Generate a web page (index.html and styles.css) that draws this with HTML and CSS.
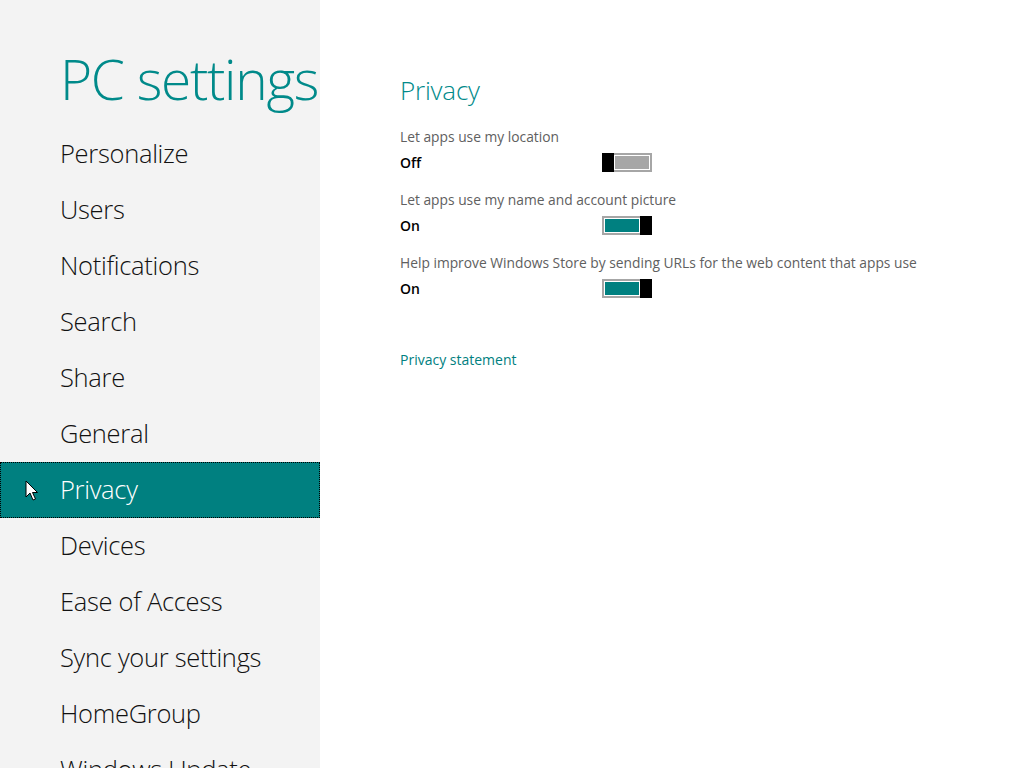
FILE: index.html
```html
<!DOCTYPE html>
<html>
<head>
<meta charset="utf-8">
<link rel="stylesheet" href="styles.css">
</head>
<body>
<div class="app">
  <aside class="nav">
    <h1 class="title">PC settings</h1>
    <ul class="menu">
      <li class="item">Personalize</li>
      <li class="item">Users</li>
      <li class="item">Notifications</li>
      <li class="item">Search</li>
      <li class="item">Share</li>
      <li class="item">General</li>
      <li class="item selected">Privacy
        <svg class="cursor" width="14" height="22" viewBox="0 0 14 22"><path d="M1 1 L1 17 L5 13 L8 20 L10.5 19 L7.5 12.5 L12.5 12.5 Z" fill="#fff" stroke="#000" stroke-width="1" stroke-linejoin="miter"/></svg>
      </li>
      <li class="item">Devices</li>
      <li class="item">Ease of Access</li>
      <li class="item">Sync your settings</li>
      <li class="item">HomeGroup</li>
      <li class="item">Windows Update</li>
    </ul>
  </aside>
  <main class="content">
    <h2 class="heading">Privacy</h2>
    <div class="setting">
      <div class="label">Let apps use my location</div>
      <div class="row"><span class="value">Off</span><span class="toggle off"><span class="fill"></span><span class="thumb"></span></span></div>
    </div>
    <div class="setting">
      <div class="label">Let apps use my name and account picture</div>
      <div class="row"><span class="value">On</span><span class="toggle on"><span class="fill"></span><span class="thumb"></span></span></div>
    </div>
    <div class="setting">
      <div class="label">Help improve Windows Store by sending URLs for the web content that apps use</div>
      <div class="row"><span class="value">On</span><span class="toggle on"><span class="fill"></span><span class="thumb"></span></span></div>
    </div>
    <a class="link">Privacy statement</a>
  </main>
</div>
</body>
</html>
```
FILE: styles.css
```css
html, body {
  margin: 0;
  padding: 0;
  height: 100%;
  overflow: hidden;
  background: #ffffff;
  font-family: "Open Sans", "Noto Sans", sans-serif;
}
.app {
  display: flex;
  height: 768px;
}
.nav {
  width: 320px;
  flex: none;
  background: #f3f3f3;
  height: 768px;
  overflow: hidden;
}
.title {
  margin: 0;
  height: 126px;
  box-sizing: border-box;
  padding: 45px 0 0 60px;
  font-size: 55px;
  line-height: 68px;
  font-weight: 300;
  color: #008a8a;
  white-space: nowrap;
  letter-spacing: -1.3px;
}
.menu {
  list-style: none;
  margin: 0;
  padding: 0;
}
.item {
  position: relative;
  height: 56px;
  line-height: 54px;
  padding-left: 60px;
  font-size: 25.5px;
  font-weight: 300;
  color: #111;
  box-sizing: border-box;
  white-space: nowrap;
  letter-spacing: -0.3px;
}
.item.selected {
  background: #008080;
  color: #ffffff;
  outline: 1px dotted #000;
  outline-offset: -1px;
}
.cursor {
  position: absolute;
  left: 25px;
  top: 18px;
}
.content {
  flex: 1;
  padding: 74px 0 0 80px;
}
.heading {
  margin: 0 0 21px 0;
  font-size: 26px;
  line-height: 32px;
  font-weight: 300;
  color: #008a8a;
  letter-spacing: -0.2px;
}
.setting {
  height: 63px;
}
.label {
  font-size: 13.8px;
  line-height: 20px;
  color: #606060;
  height: 24px;
}
.row {
  display: flex;
  align-items: center;
  height: 22px;
}
.value {
  width: 202px;
  font-size: 14px;
  font-weight: 600;
  color: #000;
}
.toggle {
  width: 50px;
  height: 19px;
  display: flex;
  box-sizing: border-box;
  position: relative;
}
.toggle .fill {
  flex: 1;
  box-sizing: border-box;
  border: 2px solid #a6a6a6;
  box-shadow: inset 0 0 0 1px #fff;
}
.toggle.off .fill {
  background: #a6a6a6;
  border-left: none;
  order: 2;
}
.toggle.off .thumb { order: 1; }
.toggle.on .fill {
  background: #008080;
  border-right: none;
}
.toggle .thumb {
  width: 12px;
  background: #000;
}
.link {
  display: block;
  margin-top: 34px;
  font-size: 14px;
  color: #008080;
}
```
